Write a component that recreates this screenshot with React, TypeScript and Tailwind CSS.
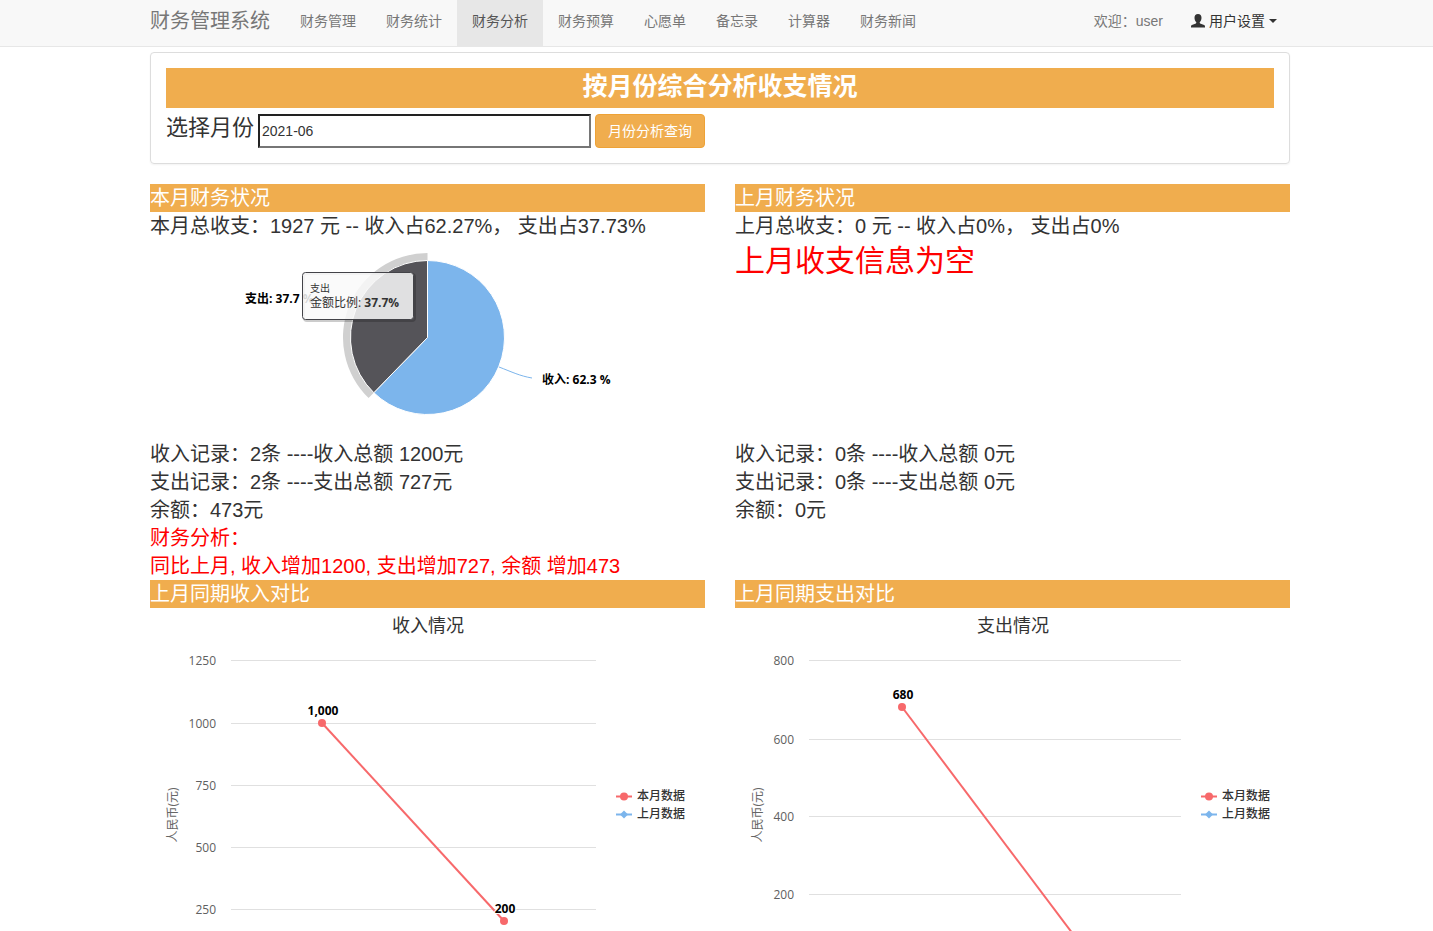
const navItems = [
  "财务管理",
  "财务统计",
  "财务分析",
  "财务预算",
  "心愿单",
  "备忘录",
  "计算器",
  "财务新闻",
];

const chartFont = "font-['Open_Sans','Noto_Sans_CJK_SC',sans-serif]";

type Tick = { label: string; y: number };
type Point = { x: number; y: number; label?: string };

function UserIcon() {
  return (
    <svg width="14" height="14" viewBox="0 0 14 14" fill="currentColor" aria-hidden="true">
      <path d="M7 0C4.700 0 3.500 1.500 3.500 3.700c0 1.800.7 3.400 1.600 4.300.3.400.3 1.100-.2 1.400L.9 11.100C.3 11.400 0 11.900 0 12.500V13.500h14v-1c0-.6-.3-1.100-.9-1.400L9.100 9.400c-.5-.3-.5-1-.2-1.400.9-.9 1.600-2.500 1.600-4.300C10.500 1.500 9.300 0 7 0z" />
    </svg>
  );
}

function Navbar() {
  return (
    <nav className="border-b border-[#e7e7e7] bg-[#f8f8f8] pl-[7px]">
      <div className="mx-auto flex h-[46px] max-w-[1140px] text-sm leading-[42px] text-[#777]">
        <a href="#" className="pr-[15px] text-xl leading-[42px]">
          财务管理系统
        </a>
        <ul className="flex">
          {navItems.map((item) => (
            <li key={item}>
              <a
                href="#"
                className={`block h-full px-[15px] ${
                  item === "财务分析" ? "bg-[#e7e7e7] text-[#555]" : ""
                }`}
              >
                {item}
              </a>
            </li>
          ))}
        </ul>
        <div className="ml-auto flex pr-[13px]">
          <span>欢迎：user</span>
          <button className="ml-7 flex items-center gap-1 self-start text-[#333]">
            <UserIcon />
            <span>用户设置</span>
            <svg width="8" height="4" viewBox="0 0 8 4" fill="currentColor" aria-hidden="true">
              <path d="M0 0h8L4 4z" />
            </svg>
          </button>
        </div>
      </div>
    </nav>
  );
}

function SearchPanel() {
  return (
    <section className="rounded border border-[#ddd] p-[15px] shadow-xs">
      <h1 className="h-10 bg-[#f0ad4e] text-center text-[25px] leading-9 font-bold text-white">
        按月份综合分析收支情况
      </h1>
      <form className="flex gap-1 pt-1.5">
        <label htmlFor="month" className="text-[22px] leading-7">
          选择月份
        </label>
        <input
          id="month"
          type="text"
          defaultValue="2021-06"
          className="h-[34px] w-[333px] border-2 border-t-[#222] border-r-[#767676] border-b-[#767676] border-l-[#222] px-[2px] text-sm"
        />
        <button
          type="button"
          className="h-[34px] rounded border border-[#eea236] bg-[#f0ad4e] px-3 text-sm text-white"
        >
          月份分析查询
        </button>
      </form>
    </section>
  );
}

function Heading({ children }: { children: string }) {
  return <h2 className="bg-[#f0ad4e] text-white">{children}</h2>;
}

function PieChart() {
  return (
    <svg viewBox="0 0 555 200" className={`block w-full ${chartFont}`} role="img" aria-label="收支比例">
      <path d="M277.500 97.500L218.600 158.100A84.500 84.500 0 0 1 277.500 13z" fill="#d0d0d0" />
      <path
        d="M277.500 97.500V20.500A77 77 0 1 1 223.800 152.700z"
        fill="#7cb5ec"
        stroke="#fff"
        strokeLinejoin="round"
      />
      <path
        d="M277.500 97.500L223.800 152.700A77 77 0 0 1 277.500 20.500z"
        fill="#555459"
        stroke="#fff"
        strokeLinejoin="round"
      />
      <path d="M349 127C362 132 370 136 382 138" fill="none" stroke="#7cb5ec" />
      <g className="text-xs font-bold">
        <text x="95" y="63">支出: 37.7 %</text>
        <text x="392" y="144">收入: 62.3 %</text>
      </g>
      {/* tooltip */}
      <rect x="154" y="34" width="111" height="47" rx="3" fill="none" stroke="#000" strokeOpacity="0.2" strokeWidth="2" />
      <rect x="152.500" y="32.500" width="111" height="47" rx="3" fill="#f9f9f9" fillOpacity="0.85" stroke="#434348" />
      <g fill="#333">
        <text x="160" y="52" className="text-[10px]">支出</text>
        <text x="160" y="67" className="text-xs">
          金额比例: <tspan className="font-bold">37.7%</tspan>
        </text>
      </g>
    </svg>
  );
}

function LineChart({
  title,
  left,
  ticks,
  points,
}: {
  title: string;
  left: number;
  ticks: Tick[];
  points: Point[];
}) {
  return (
    <svg viewBox="0 0 555 323" className={`block w-full ${chartFont}`} role="img" aria-label={title}>
      <text x="278" y="24" textAnchor="middle" fill="#333" className="text-lg">
        {title}
      </text>
      <text
        transform="translate(27 207) rotate(-90)"
        textAnchor="middle"
        fill="#666"
        className="text-xs"
      >
        人民币(元)
      </text>
      {ticks.map((t) => (
        <g key={t.label}>
          <path d={`M${left} ${t.y}.5H446`} stroke="#e0e0e0" />
          <text x={left - 15} y={t.y + 5} textAnchor="end" fill="#606060" className="text-xs">
            {t.label}
          </text>
        </g>
      ))}
      <polyline
        points={points.map((p) => `${p.x},${p.y}`).join(" ")}
        fill="none"
        stroke="#f7696b"
        strokeWidth="2"
      />
      {points.map((p) => (
        <g key={p.x}>
          <circle cx={p.x} cy={p.y} r="4" fill="#f7696b" />
          {p.label && (
            <text
              x={p.x + 1}
              y={p.y - 8}
              textAnchor="middle"
              stroke="#fff"
              strokeWidth="2"
              paintOrder="stroke"
              className="text-xs font-bold"
            >
              {p.label}
            </text>
          )}
        </g>
      ))}
      <g fill="#333" className="text-xs font-medium">
        <path d="M466 188.500H482" stroke="#f7696b" strokeWidth="2" />
        <circle cx="474" cy="188.500" r="4" fill="#f7696b" />
        <text x="487" y="192">本月数据</text>
        <path d="M466 206.500H482" stroke="#7cb5ec" strokeWidth="2" />
        <path d="M474 202.500l4 4-4 4-4-4z" fill="#7cb5ec" />
        <text x="487" y="210">上月数据</text>
      </g>
    </svg>
  );
}

export default function App() {
  return (
    <div className="h-screen overflow-hidden bg-white font-['Liberation_Sans','Noto_Sans_CJK_SC',sans-serif] text-[#333]">
      <Navbar />
      <main className="pt-[5px] pl-[7px]">
        <div className="mx-auto max-w-[1140px]">
          <SearchPanel />
          <div className="mt-5 grid grid-cols-2 gap-x-[30px] text-xl leading-7">
            <section>
              <Heading>本月财务状况</Heading>
              <p>本月总收支：1927 元 -- 收入占62.27%， 支出占37.73%</p>
              <PieChart />
              <p>收入记录：2条 ----收入总额 1200元</p>
              <p>支出记录：2条 ----支出总额 727元</p>
              <p>余额：473元</p>
              <p className="text-[#f00]">财务分析：</p>
              <p className="text-[#f00]">同比上月, 收入增加1200, 支出增加727, 余额 增加473</p>
            </section>
            <section>
              <Heading>上月财务状况</Heading>
              <p>上月总收支：0 元 -- 收入占0%， 支出占0%</p>
              <p className="h-[200px] text-3xl leading-[42px] text-[#f00]">上月收支信息为空</p>
              <p>收入记录：0条 ----收入总额 0元</p>
              <p>支出记录：0条 ----支出总额 0元</p>
              <p>余额：0元</p>
            </section>
            <section>
              <Heading>上月同期收入对比</Heading>
              <LineChart
                title="收入情况"
                left={81}
                ticks={[
                  { label: "1250", y: 52 },
                  { label: "1000", y: 115 },
                  { label: "750", y: 177 },
                  { label: "500", y: 239 },
                  { label: "250", y: 301 },
                ]}
                points={[
                  { x: 172, y: 115, label: "1,000" },
                  { x: 354, y: 313, label: "200" },
                ]}
              />
            </section>
            <section>
              <Heading>上月同期支出对比</Heading>
              <LineChart
                title="支出情况"
                left={74}
                ticks={[
                  { label: "800", y: 52 },
                  { label: "600", y: 131 },
                  { label: "400", y: 208 },
                  { label: "200", y: 286 },
                ]}
                points={[
                  { x: 167, y: 99, label: "680" },
                  { x: 353, y: 346 },
                ]}
              />
            </section>
          </div>
        </div>
      </main>
    </div>
  );
}
